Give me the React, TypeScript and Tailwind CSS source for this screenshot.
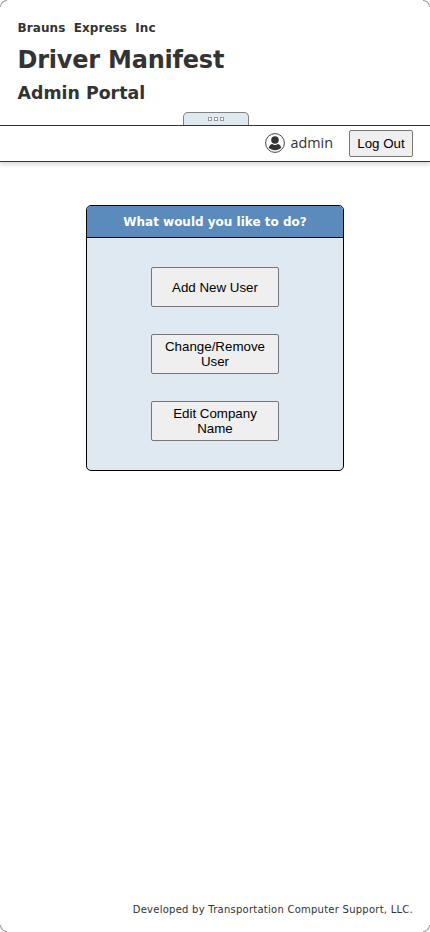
import React from "react";

function Choice({ children }: { children: React.ReactNode }) {
  return (
    <button className="flex h-10 w-32 items-center justify-center rounded-[2px] border border-[#767676] bg-[#efefef] px-1.5 text-center font-['Liberation_Sans',sans-serif] text-[13.333px] leading-[15px] text-black">
      <span>{children}</span>
    </button>
  );
}

export default function App() {
  return (
    <div className="relative h-[932px] w-[430px] overflow-hidden bg-white">
      <div className="flex h-full flex-col font-['DejaVu_Sans',sans-serif] text-[#333]">
        <header className="flex h-[125px] flex-col pl-[17.500px]">
          <p className="mt-[19px] h-[18px] text-[12px] leading-[18px] font-bold tracking-[0.08px] [word-spacing:4px]">Brauns Express Inc</p>
          <h1 className="mt-[8px] h-[30px] text-[24px] leading-[30px] font-bold tracking-[-0.22px]">Driver Manifest</h1>
          <h2 className="mt-[7px] h-[23px] text-[17.4px] leading-[23px] font-bold">Admin Portal</h2>
          <div className="mt-[7px] ml-[165.5px] flex h-[13px] w-[66px] items-center justify-center gap-[2px] rounded-t-[5px] border border-b-0 border-[#808080] bg-[#dfe9f2]">
            <i className="h-1 w-1 border border-[#999] bg-white" />
            <i className="h-1 w-1 border border-[#999] bg-white" />
            <i className="h-1 w-1 border border-[#999] bg-white" />
          </div>
        </header>
        <nav className="flex h-[37px] items-center justify-end border-y border-[#333] pr-[17px] shadow-[0_3px_4px_#ddd]">
          <svg className="relative -top-px h-5 w-5" viewBox="0 0 20 20">
            <circle cx="10" cy="10" r="9.4" fill="white" stroke="#444" strokeWidth="1" />
            <circle cx="10" cy="7" r="3.8" fill="#333" />
            <path d="M3.700 14.800C4.200 12.300 6 11 7.200 11Q10 13 12.800 11C14 11 15.800 12.300 16.300 14.800C13.500 18 6.500 18 3.700 14.800z" fill="#333" />
          </svg>
          <span className="relative -top-px ml-[5px] font-['Open_Sans',sans-serif] text-[14.4px]">admin</span>
          <button className="ml-4 h-[27px] w-16 rounded-[2px] border border-[#767676] bg-[#efefef] pt-px font-['Liberation_Sans',sans-serif] text-[13.333px] text-black">Log Out</button>
        </nav>
        <main className="mt-[43px] ml-[86px] h-[266px] w-[258px] overflow-hidden rounded-[5px] border border-black bg-[#dfe9f2]">
          <h3 className="h-8 border-b border-black bg-[#5b8abd] text-center text-[12px] leading-[32px] font-bold text-white">What would you like to do?</h3>
          <div className="flex flex-col items-center gap-[27px] pt-[29px]">
            <Choice>Add New User</Choice>
            <Choice>Change/Remove User</Choice>
            <Choice>Edit Company Name</Choice>
          </div>
        </main>
        <footer className="mt-auto pr-[17px] pb-[15px] text-right text-[10px] leading-[15px] tracking-[0.25px]">Developed by Transportation Computer Support, LLC.</footer>
      </div>
      <div className="absolute top-0 left-0 h-[7px] w-[7px] rounded-tl-[7px] border-t border-l border-[#999]" />
      <div className="absolute top-0 right-0 h-[7px] w-[7px] rounded-tr-[7px] border-t border-r border-[#999]" />
      <div className="absolute bottom-0 left-0 h-[7px] w-[7px] rounded-bl-[7px] border-b border-l border-[#999]" />
      <div className="absolute right-0 bottom-0 h-[7px] w-[7px] rounded-br-[7px] border-r border-b border-[#999]" />
    </div>
  );
}
